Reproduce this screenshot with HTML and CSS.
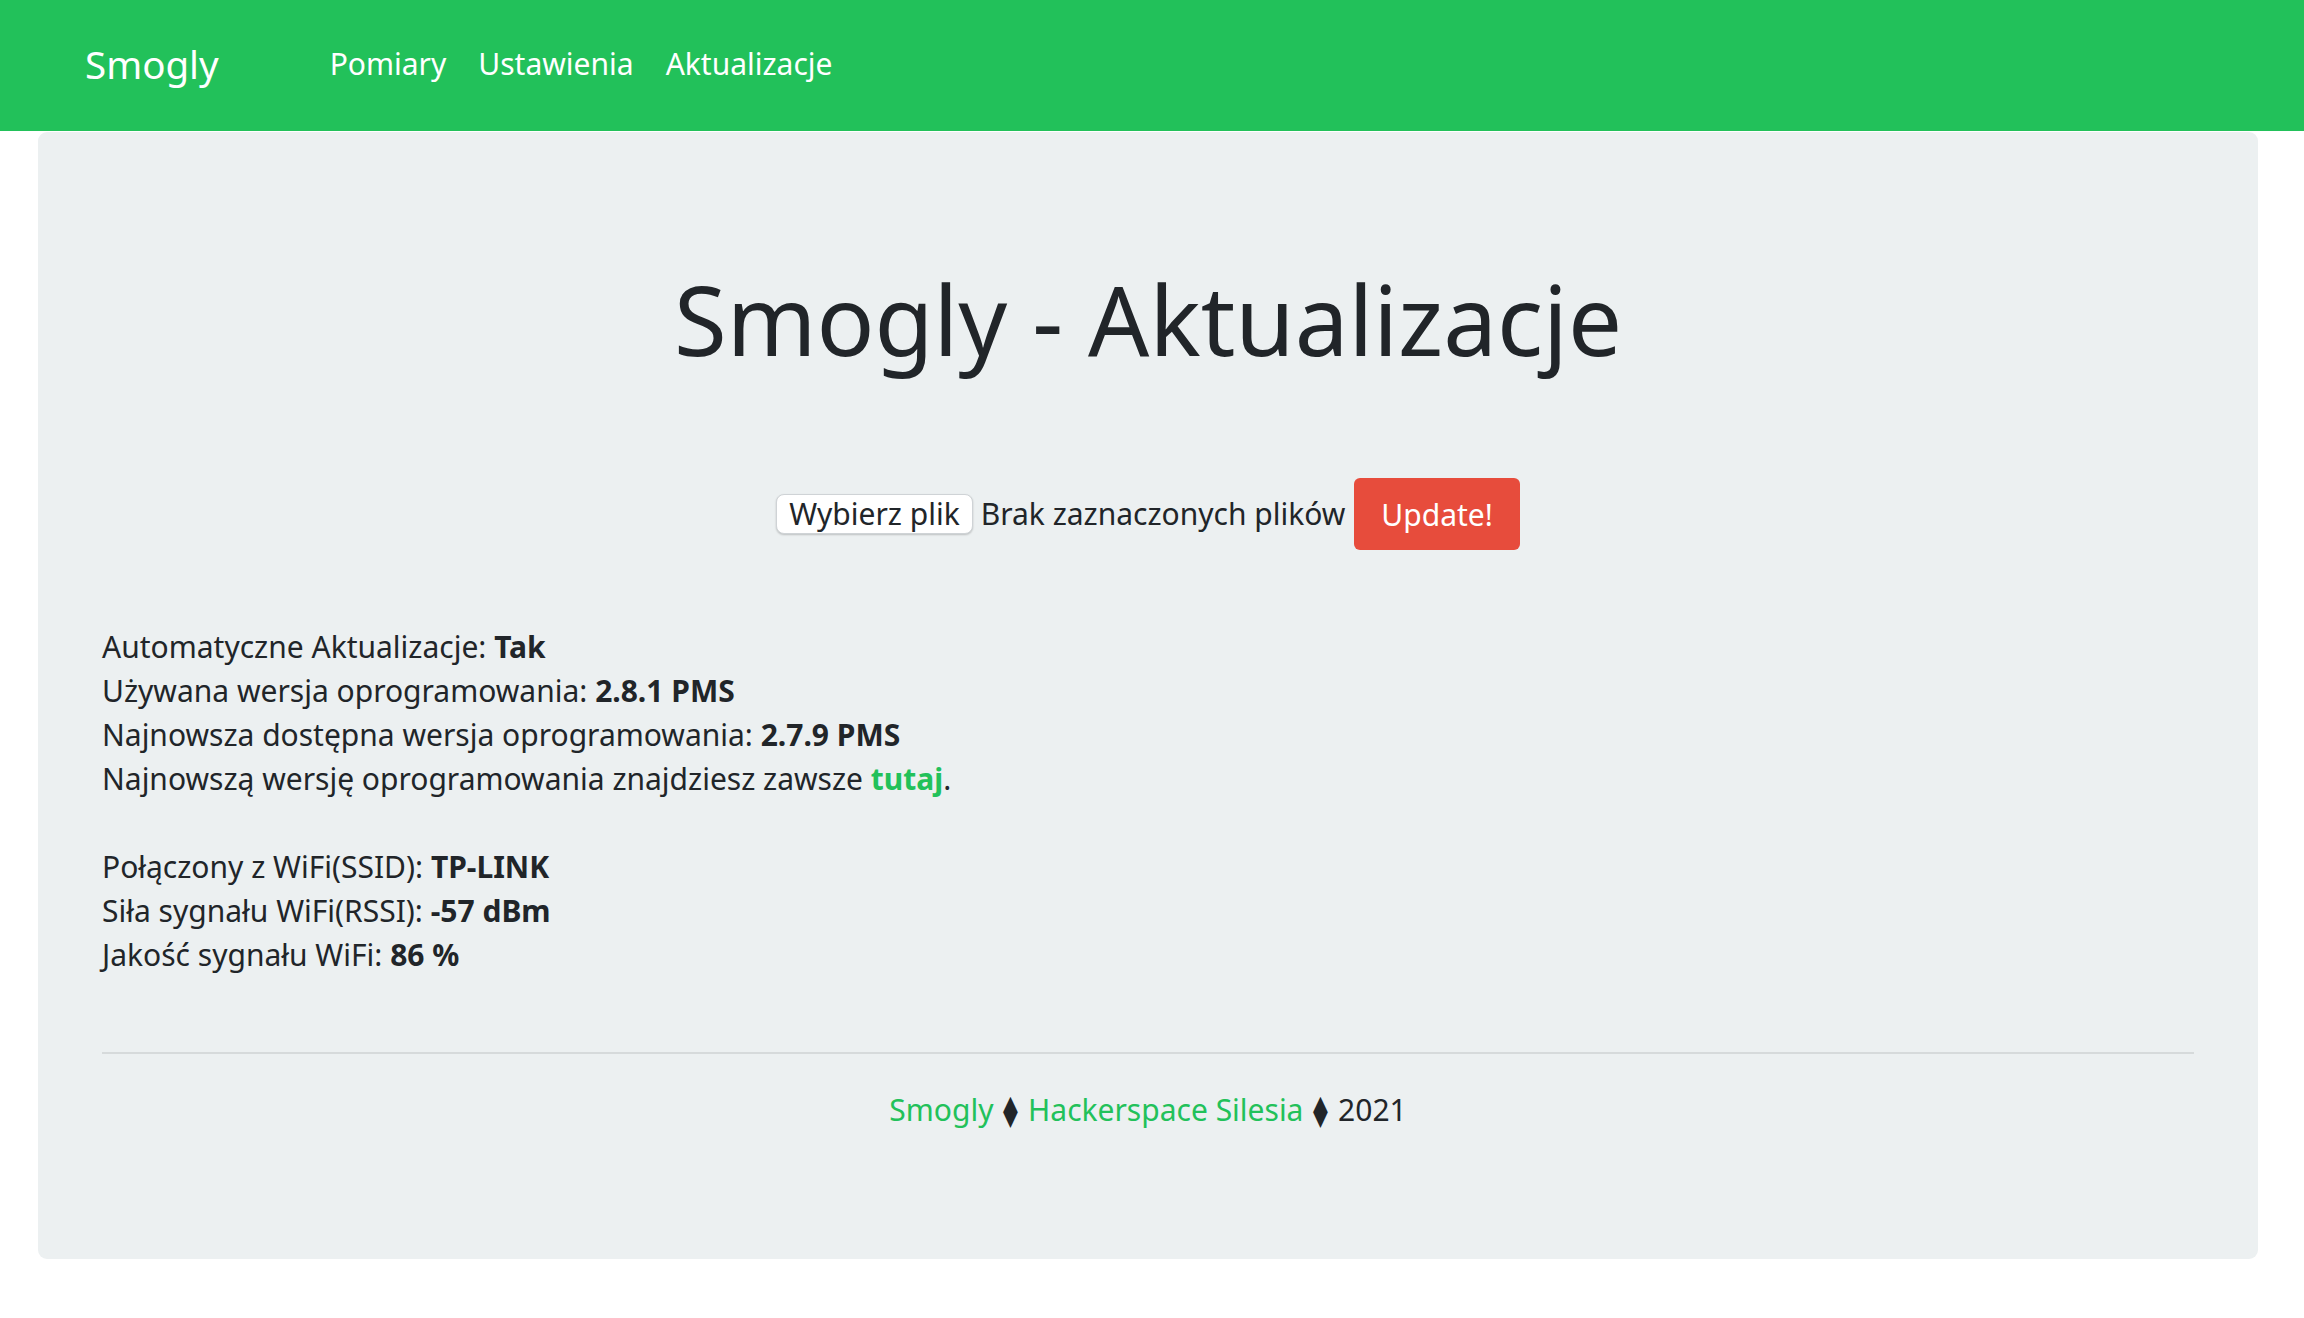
FILE: index.html
```html
<!DOCTYPE html>
<html lang="pl">
<head>
<meta charset="utf-8">
<title>Smogly - Aktualizacje</title>
<link rel="stylesheet" href="styles.css">
</head>
<body>
<nav class="navbar">
  <a class="brand" href="#">Smogly</a>
  <ul class="nav">
    <li><a href="#">Pomiary</a></li>
    <li><a href="#">Ustawienia</a></li>
    <li><a href="#">Aktualizacje</a></li>
  </ul>
</nav>
<main class="card">
  <h1 class="title">Smogly - Aktualizacje</h1>
  <form class="upload">
    <span class="file-btn">Wybierz plik</span>
    <span class="file-label">Brak zaznaczonych plików</span>
    <button class="update-btn" type="button">Update!</button>
  </form>
  <div class="info">
    <div>Automatyczne Aktualizacje: <b>Tak</b></div>
    <div>Używana wersja oprogramowania: <b>2.8.1 PMS</b></div>
    <div>Najnowsza dostępna wersja oprogramowania: <b>2.7.9 PMS</b></div>
    <div>Najnowszą wersję oprogramowania znajdziesz zawsze <a class="strong-link" href="#">tutaj</a>.</div>
    <div class="blank">&nbsp;</div>
    <div>Połączony z WiFi(SSID): <b>TP-LINK</b></div>
    <div>Siła sygnału WiFi(RSSI): <b>-57 dBm</b></div>
    <div>Jakość sygnału WiFi: <b>86 %</b></div>
  </div>
  <hr class="divider">
  <footer class="footer">
    <a href="#">Smogly</a> <span class="sep">&#x29EB;</span> <a href="#">Hackerspace Silesia</a> <span class="sep">&#x29EB;</span> 2021
  </footer>
</main>
</body>
</html>
```

FILE: styles.css
```css
* { box-sizing: border-box; }
html, body {
  margin: 0;
  padding: 0;
  background: #ffffff;
  font-family: "Noto Sans", "Open Sans", sans-serif;
  color: #212529;
  font-size: 30px;
  line-height: 44px;
}
a { color: #22c15a; text-decoration: none; }

.navbar {
  height: 131px;
  background: #22c15a;
  display: flex;
  align-items: center;
  padding-left: 85px;
  padding-bottom: 4px;
}
.brand {
  color: #ffffff;
  font-size: 38.5px;
  line-height: 44px;
  margin-right: 111px;
}
.nav {
  list-style: none;
  margin: 0;
  padding: 0;
  display: flex;
  gap: 32px;
}
.nav a {
  color: #ffffff;
  font-size: 30px;
}

.card {
  width: 2220px;
  margin: 1px 0 0 38px;
  background: #ecf0f1;
  border-radius: 9px;
  padding: 129px 64px 127px 64px;
}
.title {
  margin: 0;
  text-align: center;
  font-weight: 400;
  font-size: 96px;
  line-height: 115px;
}
.upload {
  margin-top: 102px;
  display: flex;
  justify-content: center;
  align-items: center;
  height: 72px;
}
.file-btn {
  background: #ffffff;
  border: 1px solid #cfd3d6;
  border-radius: 8px;
  box-shadow: 0 1px 2px rgba(0,0,0,0.2);
  height: 40px;
  padding: 0 12px;
  display: flex;
  align-items: center;
  font-size: 30px;
}
.file-label {
  margin-left: 8px;
  font-size: 30px;
}
.update-btn {
  margin-left: 9px;
  height: 72px;
  padding: 0 27px;
  background: #e74c3c;
  color: #ffffff;
  border: none;
  border-radius: 6px;
  font-family: inherit;
  font-size: 30px;
}
.info {
  margin-top: 75px;
}
.info b, .strong-link { font-weight: 700; }
.divider {
  margin: 75px 0 0 0;
  border: 0;
  border-top: 2px solid #d6dadb;
}
.footer {
  margin-top: 34px;
  text-align: center;
}
.sep {
  display: inline-block;
  margin: 0 2px;
}
```
